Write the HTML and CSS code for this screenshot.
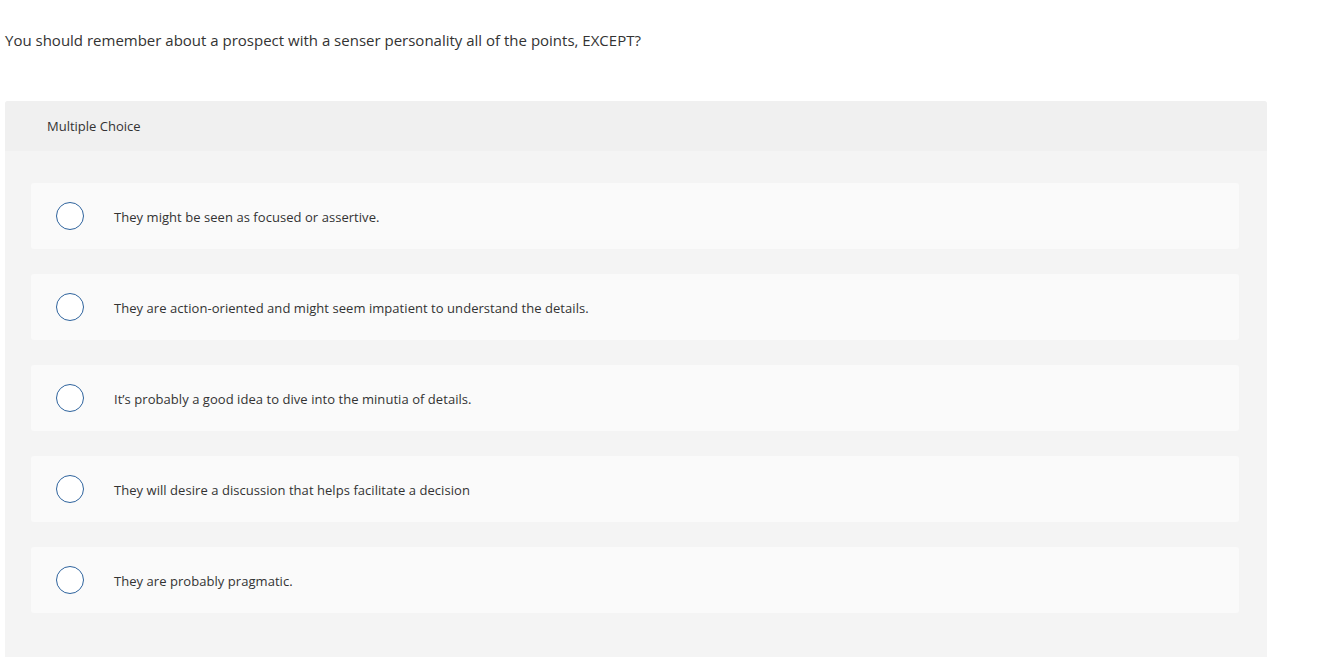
FILE: index.html
```html
<!DOCTYPE html>
<html>
<head>
<meta charset="utf-8">
<link rel="stylesheet" href="styles.css">
</head>
<body>
<div class="page">
  <p class="question">You should remember about a prospect with a senser personality all of the points, EXCEPT?</p>
  <div class="quiz">
    <div class="quiz-head">Multiple Choice</div>
    <div class="quiz-body">
      <div class="option"><span class="radio"></span><span class="label">They might be seen as focused or assertive.</span></div>
      <div class="option"><span class="radio"></span><span class="label">They are action-oriented and might seem impatient to understand the details.</span></div>
      <div class="option"><span class="radio"></span><span class="label">It’s probably a good idea to dive into the minutia of details.</span></div>
      <div class="option"><span class="radio"></span><span class="label">They will desire a discussion that helps facilitate a decision</span></div>
      <div class="option"><span class="radio"></span><span class="label">They are probably pragmatic.</span></div>
    </div>
  </div>
</div>
</body>
</html>
```
FILE: styles.css
```css
html, body {
  margin: 0;
  padding: 0;
  background: #fff;
}
body {
  font-family: "Open Sans", Lato, "Liberation Sans", sans-serif;
  color: #333;
}
.page {
  padding: 0 71px 0 5px;
}
.question {
  margin: 0;
  padding-top: 30px;
  height: 101px;
  box-sizing: border-box;
  font-size: 15px;
  line-height: 20px;
  color: #333;
}
.quiz {
  width: 1262px;
  border-radius: 3px 3px 0 0;
  overflow: hidden;
  background: #f4f4f4;
}
.quiz-head {
  height: 50px;
  background: #f0f0f0;
  padding-left: 42px;
  display: flex;
  align-items: center;
  font-size: 13px;
  color: #333;
}
.quiz-body {
  padding: 32px 28px 44px 26px;
  display: flex;
  flex-direction: column;
  gap: 25px;
}
.option {
  height: 66px;
  background: #fafafa;
  border-radius: 3px;
  display: flex;
  align-items: center;
  padding-left: 25px;
}
.radio {
  width: 26px;
  height: 26px;
  border: 1.5px solid #2e639d;
  border-radius: 50%;
  background: #fff;
  flex: none;
}
.label {
  margin-left: 30px;
  padding-top: 2px;
  font-size: 13px;
  letter-spacing: 0.05px;
  color: #333;
}
```
